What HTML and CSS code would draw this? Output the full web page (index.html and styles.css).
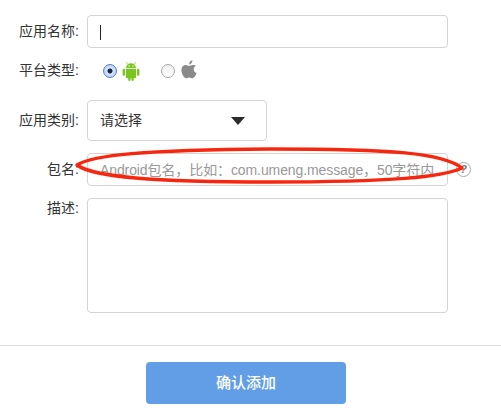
FILE: index.html
```html
<!DOCTYPE html>
<html lang="en">
<head>
    <meta charset="UTF-8">
    <title>添加应用</title>
    <link rel="stylesheet" href="styles.css">
</head>
<body>
<form class="app-form">
    <div class="row">
        <label class="row-label">应用名称:</label>
        <div class="text-box"><span class="caret"></span></div>
    </div>

    <div class="row platform-row">
        <label class="row-label">平台类型:</label>
        <div class="platform">
            <span class="radio radio-on"></span>
            <svg class="icon-android" width="18" height="20" viewBox="0 0 18 20">
                <path fill="#7cc520" d="M4 7.2a5 5 0 0 1 10 0z"/>
                <path stroke="#7cc520" stroke-width=".8" d="M5.6 3.4 4.4 1.4M12.4 3.4l1.2-2"/>
                <circle fill="#fff" cx="7" cy="5" r=".7"/>
                <circle fill="#fff" cx="11" cy="5" r=".7"/>
                <path fill="#7cc520" d="M4 8h10v8.2a1 1 0 0 1-1 1h-1.2v1.6a1.2 1.2 0 0 1-2.4 0v-1.6H8.6v1.6a1.2 1.2 0 0 1-2.4 0v-1.6H5a1 1 0 0 1-1-1z"/>
                <rect fill="#7cc520" x="0.6" y="7.8" width="2.5" height="7" rx="1.25"/>
                <rect fill="#7cc520" x="14.9" y="7.8" width="2.5" height="7" rx="1.25"/>
            </svg>
            <span class="radio radio-off"></span>
            <svg class="icon-apple" width="16" height="19" viewBox="0 0 16 19">
                <path fill="#8a8a8a" d="M8.2 4.6C7.900 2.600 9.400.7 11.400.3c.2 2.100-1.300 4.100-3.200 4.300zM11.600 4.900c-1.400 0-2.200.8-3.400.8-1.200 0-2.100-.8-3.500-.8C2.500 4.900.4 6.800.4 10c0 3.700 2.600 8.200 4.700 8.200 1.200 0 1.800-.8 3.200-.8s1.900.8 3.200.8c1.700 0 3.400-2.900 4.100-5.100-2-.8-2.900-2.300-2.900-3.900 0-1.500.9-2.700 2.300-3.400-.9-.9-2.200-.9-3.600-.9z"/>
            </svg>
        </div>
    </div>

    <div class="row">
        <label class="row-label">应用类别:</label>
        <div class="select-box">
            <span class="select-text">请选择</span>
            <span class="arrow"></span>
        </div>
    </div>

    <div class="row">
        <label class="row-label">包名:</label>
        <input class="text-input" type="text" placeholder="Android包名，比如：com.umeng.message，50字符内">
        <span class="help">?</span>
    </div>

    <div class="row row-top">
        <label class="row-label">描述:</label>
        <textarea class="text-area"></textarea>
    </div>

    <div class="actions">
        <button class="submit-btn" type="button">确认添加</button>
    </div>

    <!-- red marker drawn over the package field -->
    <svg class="marker" width="400" height="46" viewBox="0 0 400 46">
        <path d="M4 20C20 10 70 5 197 4C320 4 370 8 389 23C370 32 320 37 197 37C80 37 20 32 4 20Z" fill="none" stroke="#f7260e" stroke-width="3.500" stroke-linejoin="round"/>
    </svg>
</form>
</body>
</html>
```

FILE: styles.css
```css
/* General Styles */
* {
    box-sizing: border-box;
}

body {
    margin: 0;
    background: #fff;
    color: #333;
    font-family: "Liberation Sans", "Noto Sans CJK SC", sans-serif;
    font-size: 14px;
}

.app-form {
    position: relative;
    padding-top: 15px;
}

.row {
    display: flex;
    align-items: center;
    gap: 8px;
    margin-bottom: 12px;
}

.row-top {
    align-items: flex-start;
}

.row-label {
    width: 79px;
    flex: none;
    padding-bottom: 2px;
    text-align: right;
    line-height: 20px;
}

.text-box,
.text-input {
    position: relative;
    width: 361px;
    height: 33px;
    border: 1px solid #d4d4d4;
    border-radius: 4px;
    background: #fff;
}

.text-input {
    padding: 0 12px;
    font: inherit;
    letter-spacing: -0.1px;
    outline: none;
}

.text-input::placeholder {
    color: #999;
    opacity: 1;
}

.caret {
    position: absolute;
    left: 12px;
    top: 9px;
    width: 1px;
    height: 15px;
    background: #222;
}

/* Platform choice */
.platform-row {
    height: 22px;
    margin-bottom: 18px;
}

.platform {
    display: flex;
    align-items: center;
    padding-left: 16px;
}

.radio {
    width: 14px;
    height: 14px;
    border-radius: 50%;
    flex: none;
}

.radio-on {
    border: 1px solid #5f7cc8;
    background: radial-gradient(circle, #14264d 0 2px, #dbe8fd 3px, #9dbdf3 100%);
}

.radio-off {
    margin-left: 21px;
    border: 1px solid #a5a5a5;
    background: linear-gradient(#eee, #fff);
}

.icon-android {
    margin-left: 5px;
}

.icon-apple {
    margin: -3px 0 0 6px;
}

/* Category select */
.select-box {
    display: flex;
    align-items: center;
    justify-content: space-between;
    width: 180px;
    height: 41px;
    padding: 0 21px 0 12px;
    border: 1px solid #d4d4d4;
    border-radius: 4px;
}

.select-text {
    padding-bottom: 3px;
}

.arrow {
    width: 0;
    height: 0;
    border-left: 7.500px solid transparent;
    border-right: 7.500px solid transparent;
    border-top: 8px solid #2b2b2b;
}

.help {
    width: 15px;
    height: 15px;
    border: 1px solid #aaa;
    border-radius: 50%;
    color: #777;
    font-size: 11px;
    font-style: italic;
    font-weight: bold;
    line-height: 13px;
    text-align: center;
}

.text-area {
    display: block;
    width: 361px;
    height: 115px;
    border: 1px solid #d4d4d4;
    border-radius: 4px;
    outline: none;
    resize: none;
}

.actions {
    display: flex;
    justify-content: center;
    margin-top: 32px;
    padding: 16px 9px 0 0;
    border-top: 1px solid #ddd;
}

.submit-btn {
    width: 200px;
    height: 42px;
    padding: 0 0 3px;
    border: none;
    border-radius: 4px;
    background: #629ee6;
    color: #fff;
    font: inherit;
    font-size: 15px;
    font-weight: 500;
}

.marker {
    position: absolute;
    left: 73px;
    top: 145px;
}
```
